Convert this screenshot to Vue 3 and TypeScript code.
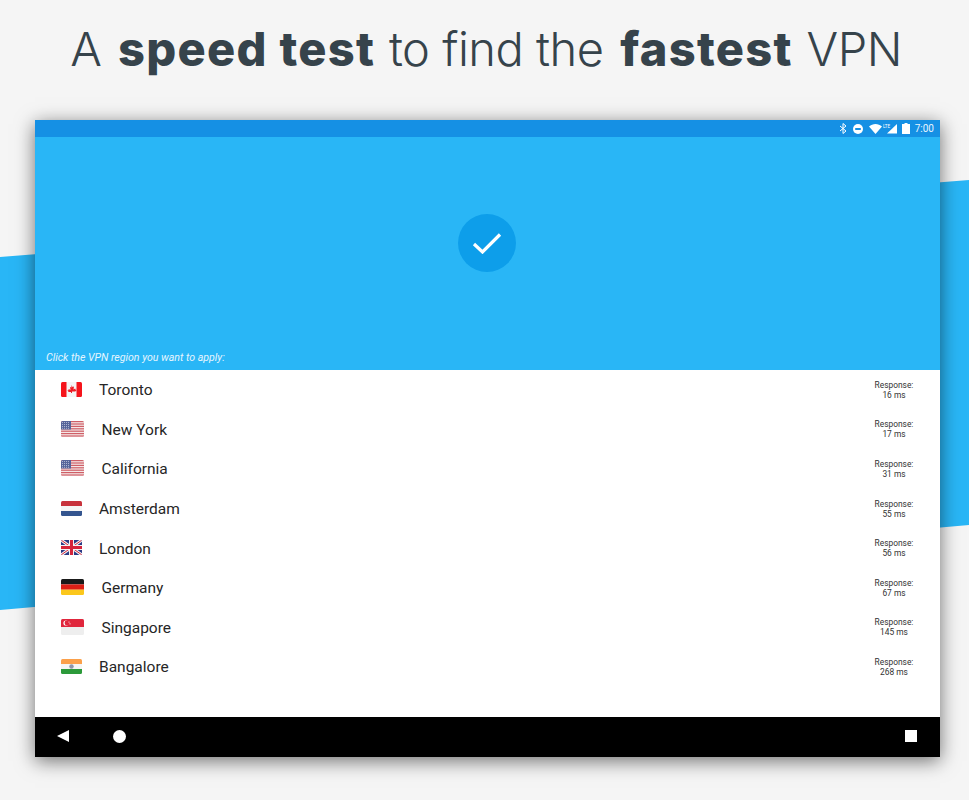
<script setup lang="ts">
interface Region {
  name: string
  flag: 'ca' | 'us' | 'nl' | 'gb' | 'de' | 'sg' | 'in'
  ms: number
}

const regions: Region[] = [
  { name: 'Toronto', flag: 'ca', ms: 16 },
  { name: 'New York', flag: 'us', ms: 17 },
  { name: 'California', flag: 'us', ms: 31 },
  { name: 'Amsterdam', flag: 'nl', ms: 55 },
  { name: 'London', flag: 'gb', ms: 56 },
  { name: 'Germany', flag: 'de', ms: 67 },
  { name: 'Singapore', flag: 'sg', ms: 145 },
  { name: 'Bangalore', flag: 'in', ms: 268 }
]

// these three flags are drawn a little wider in the app
const isWide = (r: Region) => r.flag === 'us' || r.flag === 'de' || r.flag === 'sg'
const stripes = [0, 2, 4, 6, 8, 10, 12]
</script>

<template>
  <div class="page">
    <svg class="band" width="969" height="800" viewBox="0 0 969 800" aria-hidden="true">
      <polygon points="0,257 969,180 969,525 0,610" fill="#29b6f6" />
    </svg>

    <h1 class="title">A <b>speed test</b> to find the <b>fastest</b> VPN</h1>

    <div class="device">
      <div class="status-bar">
        <svg class="bt" width="8" height="11" viewBox="0 0 8 11" fill="none" stroke="#fff" stroke-width="1">
          <path d="M1 3l6 5-3 2.5V.5L7 3 1 8" />
        </svg>
        <svg class="dnd" width="10" height="10" viewBox="0 0 10 10">
          <circle cx="5" cy="5" r="5" fill="#fff" />
          <rect x="2.2" y="4" width="5.6" height="2" fill="#1590e4" />
        </svg>
        <svg class="wifi" width="13" height="10" viewBox="0 0 13 10">
          <path d="M0 2.6C3.6-.8 9.4-.8 13 2.6L6.5 10z" fill="#fff" />
        </svg>
        <svg class="signal" width="14" height="11" viewBox="0 0 14 11">
          <path d="M14 1v9.500H4z" fill="#fff" />
          <text x="0" y="4.5" font-size="4.5" fill="#fff" font-family="Roboto, sans-serif">LTE</text>
        </svg>
        <svg class="battery" width="8" height="11" viewBox="0 0 8 11">
          <path d="M2.500 0h3v1H8v10H0V1h2.500z" fill="#fff" />
        </svg>
        <span class="clock">7:00</span>
      </div>

      <div class="hero">
        <div class="hero-main">
          <div class="check">
            <svg width="30" height="22" viewBox="0 0 30 22" fill="none" stroke="#fff" stroke-width="3.200">
              <path d="M2 12l8.500 8L28 2.500" />
            </svg>
          </div>
        </div>
        <p class="hint">Click the VPN region you want to apply:</p>
      </div>

      <ul class="list">
        <li v-for="r in regions" :key="r.name" class="row">
          <svg class="flag" :class="{ wide: isWide(r) }" :viewBox="isWide(r) ? '0 0 23 16' : '0 0 21 15'" preserveAspectRatio="none">
            <template v-if="r.flag === 'ca'">
              <rect width="21" height="15" fill="#f5f5f5" />
              <rect width="5.500" height="15" fill="#f5141b" />
              <rect x="15.500" width="5.500" height="15" fill="#f5141b" />
              <path d="M10.500 3l1 2 1.500-.6-.5 3 1.700-.9.400 1.300 1 .2-1.300 1.500H11v1.500h-1V10H7.700L6.400 8.500l1-.2.400-1.300 1.700.9-.5-3 1.500.6z" fill="#ee1c25" />
            </template>
            <template v-else-if="r.flag === 'us'">
              <rect width="23" height="16" fill="#f4e6e6" />
              <rect v-for="y in stripes" :key="y" y="0" :transform="`translate(0 ${y * 1.2})`" width="23" height="1.200" fill="#cf5f67" />
              <rect width="10" height="8.500" fill="#56649a" />
              <path d="M1 1.500h8M1 3.500h8M1 5.500h8M1 7.300h8" stroke="#c4c9de" stroke-width=".8" stroke-dasharray="1 1" />
            </template>
            <template v-else-if="r.flag === 'nl'">
              <rect width="21" height="5" fill="#c8323c" />
              <rect y="5" width="21" height="5" fill="#f5f5f5" />
              <rect y="10" width="21" height="5" fill="#34558f" />
            </template>
            <template v-else-if="r.flag === 'gb'">
              <rect width="21" height="15" fill="#2b3a85" />
              <path d="M0 0l21 15M21 0L0 15" stroke="#f3f3f3" stroke-width="3" />
              <path d="M0 0l21 15M21 0L0 15" stroke="#d5233a" stroke-width="1" />
              <path d="M10.500 0v15M0 7.500h21" stroke="#f3f3f3" stroke-width="5" />
              <path d="M10.500 0v15M0 7.500h21" stroke="#d5233a" stroke-width="3" />
            </template>
            <template v-else-if="r.flag === 'de'">
              <rect width="23" height="5.400" fill="#1a1a1a" />
              <rect y="5.400" width="23" height="5.300" fill="#dc1f16" />
              <rect y="10.700" width="23" height="5.300" fill="#fbc71c" />
            </template>
            <template v-else-if="r.flag === 'sg'">
              <rect width="23" height="16" fill="#eeeeee" />
              <rect width="23" height="8" fill="#e0263c" />
              <circle cx="5" cy="4" r="2.600" fill="#fff" />
              <circle cx="6" cy="4" r="2.400" fill="#e0263c" />
              <circle cx="8" cy="3" r=".6" fill="#fff" />
              <circle cx="9" cy="4.800" r=".6" fill="#fff" />
            </template>
            <template v-else>
              <rect width="21" height="5" fill="#fba04a" />
              <rect y="5" width="21" height="5" fill="#f5f5f5" />
              <rect y="10" width="21" height="5" fill="#2c9a3a" />
              <circle cx="10.500" cy="7.500" r="2.200" fill="#8e95a8" />
            </template>
          </svg>
          <span class="name">{{ r.name }}</span>
          <span class="response">Response:<br />{{ r.ms }} ms</span>
        </li>
      </ul>

      <div class="nav-bar">
        <span class="nav-back"></span>
        <span class="nav-home"></span>
        <span class="nav-recent"></span>
      </div>
    </div>
  </div>
</template>

<style>
html, body {
  margin: 0;
  background: #f5f5f5;
}
</style>

<style scoped>
.page {
  position: relative;
  width: 969px;
  height: 800px;
  overflow: hidden;
  background: #f5f5f5;
  font-family: Roboto, "Liberation Sans", sans-serif;
}

.band {
  position: absolute;
  left: 0;
  top: 0;
}

.title {
  position: relative;
  margin: 0;
  height: 120px;
  padding-top: 19px;
  padding-left: 3px;
  box-sizing: border-box;
  text-align: center;
  font-family: Inter, "Noto Sans", sans-serif;
  font-size: 47px;
  line-height: 60px;
  font-weight: 300;
  letter-spacing: -0.500px;
  color: #36434b;
  white-space: nowrap;
}

.title b {
  font-weight: 800;
  letter-spacing: 1.300px;
  margin-left: 4px;
  margin-right: 1px;
}

.device {
  position: relative;
  margin-left: 35px;
  width: 905px;
  height: 637px;
  display: flex;
  flex-direction: column;
  box-shadow: 0 4px 18px rgba(0, 0, 0, 0.55);
}

.status-bar {
  height: 17px;
  flex: none;
  background: #1590e4;
  display: flex;
  align-items: center;
  justify-content: flex-end;
  padding-right: 6px;
  color: #fff;
}

.status-bar .bt {
  margin-right: 6px;
}

.status-bar .dnd {
  margin-right: 6px;
}

.status-bar .wifi {
  margin-right: 1px;
}

.status-bar .signal {
  margin-right: 5px;
}

.status-bar .battery {
  margin-right: 5px;
}

.clock {
  font-size: 10px;
  color: #e8f4fd;
}

.hero {
  height: 233px;
  flex: none;
  background: #29b6f6;
  display: flex;
  flex-direction: column;
}

.hero-main {
  flex: 1;
  display: flex;
  justify-content: center;
  padding-top: 77px;
  padding-right: 2px;
}

.check {
  width: 58px;
  height: 58px;
  border-radius: 50%;
  background: #0d9eea;
  display: flex;
  align-items: center;
  justify-content: center;
}

.hint {
  margin: 0;
  padding: 0 0 5px 11px;
  font-size: 10.600px;
  line-height: 14px;
  font-style: italic;
  color: #e6f5fe;
}

.list {
  flex: 1;
  margin: 0;
  padding: 0;
  list-style: none;
  background: #fff;
}

.row {
  height: 39.600px;
  padding-left: 26px;
  padding-right: 26px;
  display: flex;
  align-items: center;
  font-size: 15.500px;
  color: #262626;
}

.flag {
  width: 21px;
  height: 15px;
  margin-right: 17px;
  margin-top: -1px;
  flex: none;
  border-radius: 1.500px;
}

.flag.wide {
  width: 23px;
  height: 16px;
  margin-right: 17.500px;
}

.name {
  flex: 1;
  padding-top: 1px;
}

.response {
  width: 40px;
  text-align: center;
  white-space: nowrap;
  font-size: 8.400px;
  line-height: 10px;
  color: #333;
}

.nav-bar {
  height: 40px;
  flex: none;
  background: #000;
  display: flex;
  align-items: center;
  padding: 0 23px 2px 22px;
  box-sizing: border-box;
}

.nav-back {
  width: 0;
  height: 0;
  border-top: 6.500px solid transparent;
  border-bottom: 6.500px solid transparent;
  border-right: 12px solid #fff;
  margin-right: 44px;
}

.nav-home {
  width: 13px;
  height: 13px;
  border-radius: 50%;
  background: #fff;
}

.nav-recent {
  width: 12px;
  height: 12px;
  background: #fff;
  margin-left: auto;
}
</style>
